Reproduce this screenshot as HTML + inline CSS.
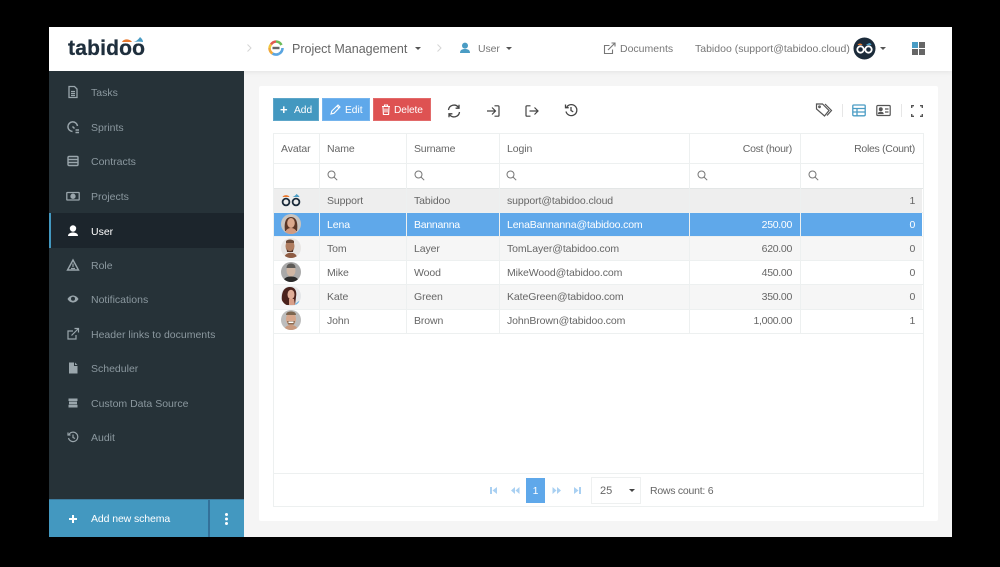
<!DOCTYPE html>
<html><head><meta charset="utf-8"><style>
*{box-sizing:border-box}
html,body{margin:0;padding:0;background:#000;width:1000px;height:567px;overflow:hidden}
body{font-family:"Liberation Sans",sans-serif;font-size:10.5px;color:#666;position:relative}
.a{position:absolute;white-space:nowrap}
.t{position:absolute;white-space:nowrap;line-height:14px;letter-spacing:-.1px;margin-top:1px}
.num{letter-spacing:-.3px}
.n{position:absolute;left:91px;color:#8b989f;font-size:10.5px;line-height:14px;white-space:nowrap;margin-top:1px}
.ni{position:absolute;left:66px;width:14px;height:14px}
.btn{position:absolute;top:98px;height:23px;color:#fff;line-height:25px;font-size:10.2px;box-shadow:inset 0 0 0 1px rgba(255,255,255,.14)}
.v{position:absolute;width:1px;background:#edf0f0;top:133px;height:200px}
.h{position:absolute;left:273px;width:650px;height:1px;background:#edf0f0}
.r{position:absolute;left:274px;width:648px}
svg{position:absolute;display:block}
.f{border-radius:50%}
</style></head><body>
<div class="a" style="left:49px;top:27px;width:903px;height:510px;background:#f5f5f5"></div>
<div class="a" style="left:49px;top:27px;width:903px;height:44px;background:#fff;box-shadow:0 1px 5px rgba(0,0,0,.08)"></div>

<!-- logo -->
<svg style="left:66px;top:34px" width="82" height="24" viewBox="0 0 82 24">
<text x="2" y="21" font-family="Liberation Sans" font-weight="700" font-size="21" fill="#1f2f3d" stroke="#1f2f3d" stroke-width=".3" textLength="77" lengthAdjust="spacing">tabidoo</text>
<path d="M56 8c1.500-3.500 8-3.500 10 0z" fill="#e8792f"/><path d="M67.500 8c2.500-.5 5-2.500 6.500-5 2 1.500 3 3.500 3 5-3-.5-6-.5-9.500 0z" fill="#4a9cc4"/></svg>

<!-- breadcrumb -->
<svg style="left:246px;top:43px" width="6" height="10" viewBox="0 0 6 10" fill="none" stroke="#d5d5d5" stroke-width="1"><path d="M1.500 1.500L5 5 1.500 8.500"/></svg>
<svg style="left:268px;top:40px" width="16" height="16" viewBox="0 0 16 16" fill="none" stroke-width="2.600"><path d="M3 4.500A6.500 6.500 0 0 1 8 1.500" stroke="#e05a4f"/><path d="M8 1.500A6.500 6.500 0 0 1 13.500 5" stroke="#6cbb5a"/><path d="M14.500 8A6.500 6.500 0 0 1 11 13.800" stroke="#5aa5e0"/><path d="M11 13.800A6.500 6.500 0 0 1 4.500 13.500" stroke="#5aa5e0"/><path d="M4.500 13.500A6.500 6.500 0 0 1 1.500 8" stroke="#f0a93c"/><path d="M1.500 8A6.500 6.500 0 0 1 3 4.500" stroke="#f0c63c"/><rect x="4.500" y="6.800" width="7" height="2.400" fill="#666" stroke="none"/></svg>
<div class="t" style="left:292px;top:41px;font-size:12.500px;color:#666;letter-spacing:0">Project Management</div>
<div class="a" style="left:415px;top:47px;border:3px solid transparent;border-top:3.500px solid #555;border-bottom:0"></div>
<svg style="left:436px;top:43px" width="6" height="10" viewBox="0 0 6 10" fill="none" stroke="#d5d5d5" stroke-width="1"><path d="M1.500 1.500L5 5 1.500 8.500"/></svg>
<svg style="left:459px;top:42px" width="12" height="12" viewBox="0 0 12 12"><circle cx="6" cy="3.600" r="3" fill="#4a9cc4"/><path d="M1 11c0-3 2-4 5-4s5 1 5 4z" fill="#4a9cc4"/></svg>
<div class="t" style="left:478px;top:41px;color:#777">User</div>
<div class="a" style="left:506px;top:47px;border:3px solid transparent;border-top:3.500px solid #555;border-bottom:0"></div>

<svg style="left:603px;top:42px" width="13" height="13" viewBox="0 0 13 13" fill="none" stroke="#777" stroke-width="1.100"><path d="M9.500 7.500v4h-8v-8h5"/><path d="M5 8l7-7M8.500 1H12v3.500"/></svg>
<div class="t" style="left:620px;top:41px;color:#777;letter-spacing:0">Documents</div>
<div class="t" style="left:695px;top:41px;color:#777;letter-spacing:0">Tabidoo (support@tabidoo.cloud)</div>
<svg style="left:853px;top:37px" width="23" height="23" viewBox="0 0 23 23"><circle cx="11.500" cy="11.500" r="11" fill="#1b2b3a"/><circle cx="7.500" cy="12.500" r="3.200" fill="none" stroke="#fff" stroke-width="1.800"/><circle cx="15.500" cy="12.500" r="3.200" fill="none" stroke="#fff" stroke-width="1.800"/><path d="M4.500 8c1-2 4-2 5 0z" fill="#e8792f"/><path d="M13 8c1-1 3-2 4-2 1 1 1.500 1.500 1.500 2z" fill="#4a9cc4"/></svg>
<div class="a" style="left:880px;top:47px;border:3px solid transparent;border-top:3.500px solid #555;border-bottom:0"></div>
<div class="a" style="left:912px;top:42px;width:6px;height:6px;background:#4a9cc4"></div>
<div class="a" style="left:919px;top:42px;width:6px;height:6px;background:#666"></div>
<div class="a" style="left:912px;top:49px;width:6px;height:6px;background:#666"></div>
<div class="a" style="left:919px;top:49px;width:6px;height:6px;background:#666"></div>

<!-- sidebar -->
<div class="a" style="left:49px;top:71px;width:195px;height:429px;background:#263238"></div>
<div class="a" style="left:49px;top:213px;width:195px;height:35px;background:#1c252c;border-left:2px solid #4398c0"></div>

<svg class="ni" style="top:85px" viewBox="0 0 14 14" fill="none" stroke="#9aa6ac" stroke-width="1.300"><path d="M3 1.500h5.500l2.500 2.500v8.500H3zM5 6.500h4M5 8.500h4M5 10.500h4"/></svg>
<div class="n" style="top:85px">Tasks</div>
<svg class="ni" style="top:120px" viewBox="0 0 14 14" fill="none" stroke="#9aa6ac" stroke-width="1.500"><path d="M6.500 11.500A4.800 4.800 0 1 1 11.500 6"/><path d="M6.500 6.500l2 2M9.500 10h3.500M9.500 12.500h3.500"/></svg>
<div class="n" style="top:120px">Sprints</div>
<svg class="ni" style="top:154px" viewBox="0 0 14 14" fill="none" stroke="#9aa6ac" stroke-width="1.400"><rect x="2" y="2.500" width="10" height="9" rx="1"/><path d="M2 5.500h10M2 8.500h10"/></svg>
<div class="n" style="top:154px">Contracts</div>
<svg class="ni" style="top:189px" viewBox="0 0 14 14" fill="none" stroke="#9aa6ac" stroke-width="1.300"><rect x=".8" y="3.500" width="12.400" height="7.500" rx=".5"/><circle cx="7" cy="7.200" r="2" fill="#9aa6ac"/></svg>
<div class="n" style="top:189px">Projects</div>
<svg class="ni" style="top:224px" viewBox="0 0 14 14" fill="#fff"><circle cx="7" cy="4.500" r="3.200"/><path d="M2 12c0-2.500 2.500-3.500 5-3.500s5 1 5 3.500z"/></svg>
<div class="n" style="top:224px;color:#fff">User</div>
<svg class="ni" style="top:258px" viewBox="0 0 14 14" fill="none" stroke="#9aa6ac" stroke-width="1.400"><path d="M7 2l5.500 10h-11z"/><path d="M7 5.500v3.500M5 10.500h4" stroke-width="1.200"/></svg>
<div class="n" style="top:258px">Role</div>
<svg class="ni" style="top:292px" viewBox="0 0 14 14"><path d="M1.500 7C3 4.500 5 3.500 7 3.500S11 4.500 12.500 7C11 9.500 9 10.500 7 10.500S3 9.500 1.500 7z" fill="#9aa6ac"/><circle cx="7" cy="6.800" r="2" fill="#263238"/></svg>
<div class="n" style="top:292px">Notifications</div>
<svg class="ni" style="top:327px" viewBox="0 0 14 14" fill="none" stroke="#9aa6ac" stroke-width="1.200"><path d="M10 8v4H2V4h5"/><path d="M5.500 8.500L12 2M8.500 1.500H12.500V5.500"/></svg>
<div class="n" style="top:327px">Header links to documents</div>
<svg class="ni" style="top:361px" viewBox="0 0 14 14" fill="#9aa6ac"><path d="M3 1.500h5v3.500h3.500v7.500H3zM9 1.500l2.500 2.500H9z"/></svg>
<div class="n" style="top:361px">Scheduler</div>
<svg class="ni" style="top:396px" viewBox="0 0 14 14" fill="#9aa6ac"><rect x="2.500" y="2.500" width="9" height="2.500"/><rect x="3" y="5.500" width="8" height="2.800"/><rect x="2.500" y="8.800" width="9" height="2.700"/></svg>
<div class="n" style="top:396px">Custom Data Source</div>
<svg class="ni" style="top:430px" viewBox="0 0 14 14" fill="none" stroke="#9aa6ac" stroke-width="1.200"><path d="M3 4.500A4.700 4.700 0 1 1 2.500 8"/><path d="M2 2.500v2.500h2.500M7 4.500V7.500l2 1"/></svg>
<div class="n" style="top:430px">Audit</div>

<div class="a" style="left:49px;top:499px;width:195px;height:38px;background:#4398c0;border-top:1px solid #3d7c9f"></div>
<div class="a" style="left:208px;top:500px;width:2px;height:37px;background:#33719a"></div>
<div class="a" style="left:69px;top:518px;width:8px;height:1.500px;background:#fff"></div>
<div class="a" style="left:72.250px;top:514.500px;width:1.500px;height:8px;background:#fff"></div>
<div class="t" style="left:91px;top:511px;color:#fff;font-size:10.500px;letter-spacing:-.1px">Add new schema</div>
<div class="a" style="left:225px;top:513px;width:3px;height:3px;border-radius:2px;background:#fff;box-shadow:0 4.500px 0 #fff,0 9px 0 #fff"></div>

<!-- card -->
<div class="a" style="left:259px;top:86px;width:679px;height:435px;background:#fff;border-radius:2px"></div>

<div class="btn" style="left:273px;width:46px;background:#4398c0"><span style="position:absolute;left:7px;font-size:13px;font-weight:700;line-height:23px">+</span><span style="position:absolute;left:21px">Add</span></div>
<div class="btn" style="left:322px;width:48px;background:#5fa8ea"><svg style="left:8px;top:6px" width="11" height="11" viewBox="0 0 11 11" fill="none" stroke="#fff" stroke-width="1.100"><path d="M1 10l.8-3L8 1l2 2-6 6.200zM7 2l2 2"/></svg><span style="position:absolute;left:23px">Edit</span></div>
<div class="btn" style="left:373px;width:58px;background:#de5252"><svg style="left:8px;top:6px" width="10" height="11" viewBox="0 0 10 11" fill="none" stroke="#fff" stroke-width="1.100"><path d="M1 2.500h8M3.500 2.500V1h3v1.500M2 2.500l.4 8h5.200l.4-8M4 4.500v4M6 4.500v4"/></svg><span style="position:absolute;left:21px;letter-spacing:-.1px">Delete</span></div>

<!-- toolbar icons -->
<svg style="left:447px;top:104px" width="14" height="14" viewBox="0 0 14 14" fill="none" stroke="#444" stroke-width="1.300"><path d="M1.500 6A5.500 5.500 0 0 1 11.500 3.500M12.500 8A5.500 5.500 0 0 1 2.500 10.500"/><path d="M12 .8v3.400H8.600M2 13.200V9.800h3.400"/></svg>
<svg style="left:486px;top:104px" width="14" height="14" viewBox="0 0 14 14" fill="none" stroke="#444" stroke-width="1.200"><path d="M1 7h8M6 3.500L9.500 7 6 10.500M8.500 1.800H12c.7 0 1 .4 1 1v8.400c0 .6-.3 1-1 1H8.500"/></svg>
<svg style="left:525px;top:104px" width="14" height="14" viewBox="0 0 14 14" fill="none" stroke="#444" stroke-width="1.200"><path d="M5.500 1.800H2c-.7 0-1 .4-1 1v8.400c0 .6.300 1 1 1h3.500M4.500 7h8.500M9.500 3.500L13 7l-3.500 3.500"/></svg>
<svg style="left:564px;top:103px" width="14" height="14" viewBox="0 0 14 14" fill="none" stroke="#444" stroke-width="1.300"><path d="M2.800 4A5.500 5.500 0 1 1 2 8.500"/><path d="M1.500 1.500v3.200h3.200M7 4v3.500l2.200 1.300"/></svg>

<svg style="left:815px;top:102px" width="18" height="16" viewBox="0 0 18 16" fill="none" stroke="#555" stroke-width="1.200"><path d="M1.500 2h6l6.500 6.500-4.500 5.500-8-7zM10 2l6.500 6.500-4.500 5"/><circle cx="4.500" cy="4.800" r=".8"/></svg>
<div class="a" style="left:842px;top:104px;width:1px;height:13px;background:#e6e6e6"></div>
<svg style="left:852px;top:104px" width="14" height="13" viewBox="0 0 14 13" fill="none" stroke="#4a9cc4" stroke-width="1.300"><rect x=".8" y="1" width="12.400" height="10.800" rx="1"/><path d="M.8 4.500h12.400M.8 8h12.400M5 4.500v7.300"/></svg>
<svg style="left:876px;top:104px" width="15" height="13" viewBox="0 0 15 13" fill="none" stroke="#555" stroke-width="1.200"><rect x=".8" y="1.500" width="13.400" height="10" rx="1"/><circle cx="4.800" cy="5.200" r="1.400" fill="#555"/><path d="M2.500 9.500c.3-1.500 4.200-1.500 4.500 0z" fill="#555"/><path d="M9 5h3.500M9 8h3.500"/></svg>
<div class="a" style="left:901px;top:104px;width:1px;height:13px;background:#e6e6e6"></div>
<svg style="left:911px;top:105px" width="12" height="12" viewBox="0 0 12 12" fill="none" stroke="#555" stroke-width="1.400"><path d="M.7 3V.7H3M9 .7h2.300V3M11.300 9v2.300H9M3 11.300H.7V9"/></svg>

<!-- table row fills -->
<div class="r" style="top:189px;height:23px;background:#eeeeee"></div>
<div class="r" style="top:213px;height:23px;background:#5fa8ea"></div>
<div class="r" style="top:237px;height:23px;background:#f6f6f6"></div>
<div class="r" style="top:285px;height:24px;background:#f6f6f6"></div>

<div class="h" style="top:133px"></div><div class="h" style="top:163px"></div><div class="h" style="top:188px;background:#e3e6e6"></div><div class="h" style="top:212px"></div><div class="h" style="top:236px"></div><div class="h" style="top:260px"></div><div class="h" style="top:284px"></div><div class="h" style="top:309px"></div><div class="h" style="top:333px"></div>
<div class="h" style="top:473px"></div><div class="h" style="top:506px"></div>
<div class="v" style="left:273px;height:374px"></div><div class="v" style="left:319px"></div><div class="v" style="left:406px"></div><div class="v" style="left:499px"></div><div class="v" style="left:689px"></div><div class="v" style="left:800px"></div><div class="v" style="left:923px;height:374px"></div>

<!-- headers -->
<div class="t" style="left:281px;top:141px">Avatar</div>
<div class="t" style="left:327px;top:141px">Name</div>
<div class="t" style="left:414px;top:141px;letter-spacing:-.2px">Surname</div>
<div class="t" style="left:507px;top:141px">Login</div>
<div class="t num" style="right:208px;top:141px">Cost (hour)</div>
<div class="t num" style="right:85px;top:141px">Roles (Count)</div>

<!-- search icons -->
<svg style="left:327px;top:170px" width="11" height="11" viewBox="0 0 11 11" fill="none" stroke="#777" stroke-width="1"><circle cx="4.500" cy="4.500" r="3.500"/><path d="M7 7l3.200 3.200"/></svg>
<svg style="left:414px;top:170px" width="11" height="11" viewBox="0 0 11 11" fill="none" stroke="#777" stroke-width="1"><circle cx="4.500" cy="4.500" r="3.500"/><path d="M7 7l3.200 3.200"/></svg>
<svg style="left:506px;top:170px" width="11" height="11" viewBox="0 0 11 11" fill="none" stroke="#777" stroke-width="1"><circle cx="4.500" cy="4.500" r="3.500"/><path d="M7 7l3.200 3.200"/></svg>
<svg style="left:697px;top:170px" width="11" height="11" viewBox="0 0 11 11" fill="none" stroke="#777" stroke-width="1"><circle cx="4.500" cy="4.500" r="3.500"/><path d="M7 7l3.200 3.200"/></svg>
<svg style="left:808px;top:170px" width="11" height="11" viewBox="0 0 11 11" fill="none" stroke="#777" stroke-width="1"><circle cx="4.500" cy="4.500" r="3.500"/><path d="M7 7l3.200 3.200"/></svg>

<!-- avatars -->
<svg style="left:281px;top:193px" width="20" height="14" viewBox="0 0 20 14"><circle cx="5" cy="9" r="3.400" fill="none" stroke="#1b2b3a" stroke-width="1.800"/><circle cx="15" cy="9" r="3.400" fill="none" stroke="#1b2b3a" stroke-width="1.800"/><path d="M1.500 4c1-2.500 6-2.500 7 0z" fill="#e8792f"/><path d="M11.500 4c1.500-.5 3-1.500 4-3 1.500 1 2.500 2 3 3z" fill="#4a9cc4"/></svg>
<svg class="f" style="left:281px;top:214px" width="20" height="20" viewBox="0 0 20 20"><rect width="20" height="20" fill="#c9c4bf"/><path d="M4 17c-1-7 0-14 6-14s7 7 6 14z" fill="#5a3626"/><ellipse cx="10" cy="9" rx="3.800" ry="5" fill="#dba98d"/><path d="M4 20c0-4 3-6 6-6s6 2 6 6z" fill="#d19b80"/></svg>
<svg class="f" style="left:281px;top:238px" width="20" height="20" viewBox="0 0 20 20"><rect width="20" height="20" fill="#e8e6e4"/><ellipse cx="9" cy="8" rx="4.500" ry="6" fill="#b07d5f"/><path d="M5 3c2-2 6-2 8 0v2H5z" fill="#6b4a38"/><path d="M5.500 10c1 4 6 4 7 0l-.5 4H6z" fill="#55362a"/><path d="M3 20c1-4 4-6 9-5 3 1 4 3 4 5z" fill="#8e5c43"/></svg>
<svg class="f" style="left:281px;top:262px" width="20" height="20" viewBox="0 0 20 20"><rect width="20" height="20" fill="#a9a9a9"/><ellipse cx="10" cy="8.500" rx="4.500" ry="6" fill="#cfb6a4"/><path d="M5.500 6c0-3 2-4.500 4.500-4.500S14.500 3 14.500 6z" fill="#5d5a57"/><path d="M2 20c.5-4 4-5.500 8-5.500s7.500 1.500 8 5.500z" fill="#2a2a2a"/></svg>
<svg class="f" style="left:281px;top:286px" width="20" height="20" viewBox="0 0 20 20"><rect width="20" height="20" fill="#e4e6e8"/><path d="M1 16C0 6 3 1 9 1s7 6 6 10l-1 8H5z" fill="#4a221c"/><ellipse cx="10" cy="8.500" rx="3.500" ry="4.800" fill="#e0ae98"/><path d="M8 13h5l1 6H8z" fill="#d89f88"/><path d="M14 18l4-3 1 2-3 3z" fill="#6fb3e0"/></svg>
<svg class="f" style="left:281px;top:310px" width="20" height="20" viewBox="0 0 20 20"><rect width="20" height="20" fill="#bdbdbd"/><ellipse cx="10" cy="9" rx="5" ry="6.500" fill="#d8a78c"/><path d="M5 5c0-3 3-3.500 5-3.500s5 .5 5 3.500z" fill="#7d6650"/><path d="M6 11h8l-1 3.500H7z" fill="#8b6b52"/><rect x="7.500" y="11.500" width="5" height="1.500" fill="#fff"/><path d="M3 20c.5-3 3.500-5 7-5s6.500 2 7 5z" fill="#c99a7f"/></svg>

<!-- rows -->
<div class="t" style="left:327px;top:193px">Support</div><div class="t" style="left:414px;top:193px">Tabidoo</div><div class="t" style="left:507px;top:193px">support@tabidoo.cloud</div><div class="t num" style="right:85px;top:193px">1</div>
<div class="t" style="left:327px;top:217px;color:#fff">Lena</div><div class="t" style="left:414px;top:217px;color:#fff;letter-spacing:-.25px">Bannanna</div><div class="t" style="left:507px;top:217px;color:#fff;letter-spacing:-.15px">LenaBannanna@tabidoo.com</div><div class="t num" style="right:208px;top:217px;color:#fff">250.00</div><div class="t num" style="right:85px;top:217px;color:#fff">0</div>
<div class="t" style="left:327px;top:241px">Tom</div><div class="t" style="left:414px;top:241px">Layer</div><div class="t" style="left:507px;top:241px">TomLayer@tabidoo.com</div><div class="t num" style="right:208px;top:241px">620.00</div><div class="t num" style="right:85px;top:241px">0</div>
<div class="t" style="left:327px;top:265px">Mike</div><div class="t" style="left:414px;top:265px">Wood</div><div class="t" style="left:507px;top:265px">MikeWood@tabidoo.com</div><div class="t num" style="right:208px;top:265px">450.00</div><div class="t num" style="right:85px;top:265px">0</div>
<div class="t" style="left:327px;top:289px">Kate</div><div class="t" style="left:414px;top:289px">Green</div><div class="t" style="left:507px;top:289px">KateGreen@tabidoo.com</div><div class="t num" style="right:208px;top:289px">350.00</div><div class="t num" style="right:85px;top:289px">0</div>
<div class="t" style="left:327px;top:313px">John</div><div class="t" style="left:414px;top:313px">Brown</div><div class="t" style="left:507px;top:313px">JohnBrown@tabidoo.com</div><div class="t num" style="right:208px;top:313px">1,000.00</div><div class="t num" style="right:85px;top:313px">1</div>

<!-- pager -->
<svg style="left:489px;top:486px" width="9" height="9" viewBox="0 0 9 9" fill="#a9d0f2"><rect x="1" y="1" width="2" height="7"/><path d="M8 1v7L3.500 4.500z"/></svg>
<svg style="left:510px;top:486px" width="10" height="9" viewBox="0 0 10 9" fill="#a9d0f2"><path d="M5 1v7L1 4.500zM9.500 1v7L5.500 4.500z"/></svg>
<div class="a" style="left:526px;top:478px;width:19px;height:25px;background:#5fa8ea;color:#fff;text-align:center;line-height:26px;font-size:10.500px">1</div>
<svg style="left:552px;top:486px" width="10" height="9" viewBox="0 0 10 9" fill="#a9d0f2"><path d="M.5 1v7l4-3.500zM5 1v7l4-3.500z"/></svg>
<svg style="left:573px;top:486px" width="9" height="9" viewBox="0 0 9 9" fill="#a9d0f2"><path d="M1 1v7l4.500-3.500z"/><rect x="6" y="1" width="2" height="7"/></svg>
<div class="a" style="left:591px;top:477px;width:50px;height:27px;border:1px solid #eef0f0"></div>
<div class="t" style="left:600px;top:483px;font-size:11px;letter-spacing:0">25</div>
<div class="a" style="left:629px;top:489px;border:3px solid transparent;border-top:3.500px solid #444;border-bottom:0"></div>
<div class="t" style="left:650px;top:483px;letter-spacing:-.25px">Rows count: 6</div>
</body></html>
